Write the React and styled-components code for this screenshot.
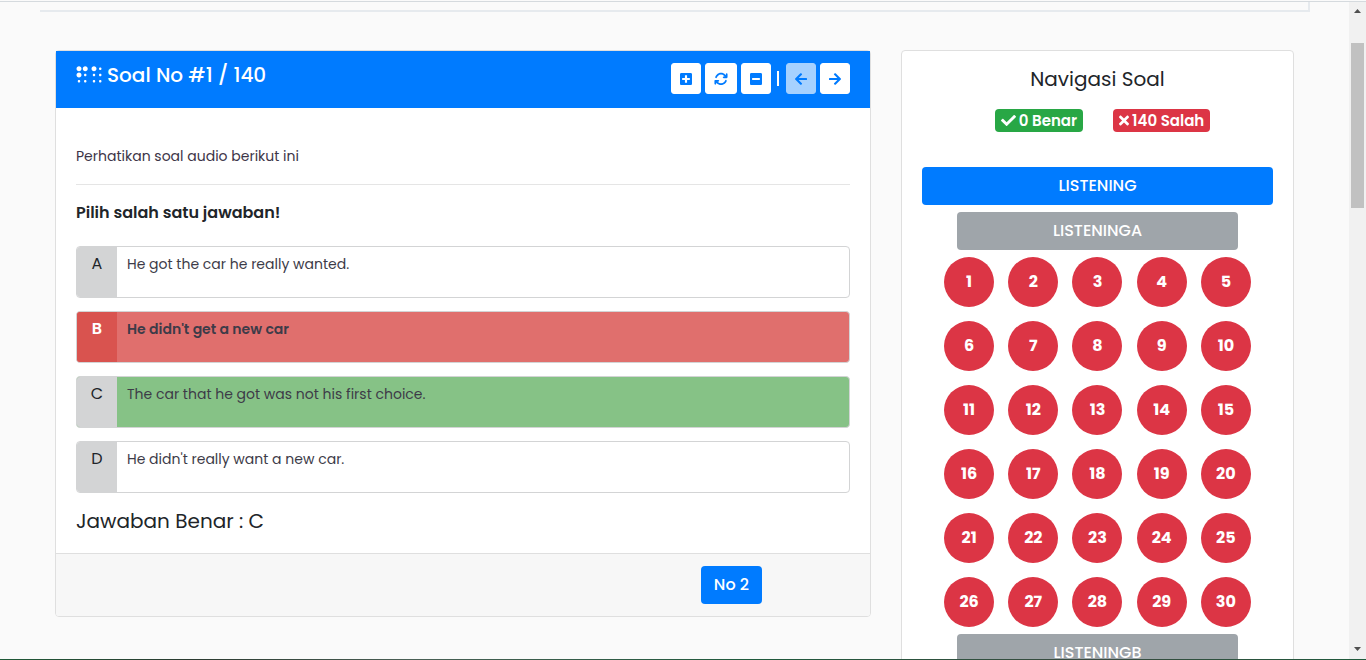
import React from "react";
import styled, { createGlobalStyle } from "styled-components";
import {
  FaBraille,
  FaPlusSquare,
  FaMinusSquare,
  FaArrowLeft,
  FaArrowRight,
  FaCheck,
  FaTimes,
} from "react-icons/fa";
import { FaArrowsRotate } from "react-icons/fa6";

const GlobalStyle = createGlobalStyle`
  *, *::before, *::after { box-sizing: border-box; }
  body {
    margin: 0;
    background: #fafafa;
    color: #212529;
    font-family: Poppins, Inter, "Open Sans", sans-serif;
    font-size: 16px;
    line-height: 24px;
  }
  button { font: inherit; cursor: pointer; }
  h1, h2, h3, p, ul { margin: 0; padding: 0; }
`;

const Frame = styled.div`
  display: flex;
  flex-direction: column;
  height: 100vh;
  overflow: hidden;
`;

const TopEdge = styled.div`
  flex: none;
  height: 2px;
  border-bottom: 1px solid #d5dade;
`;

const BottomEdge = styled.div`
  flex: none;
  height: 1px;
  background: linear-gradient(90deg, #1f5a38, #2b3a30 14%, #4a5f55 30%, #1f5a3c 55%, #3a4a40 80%, #1f5a3c);
`;

const Window = styled.div`
  display: flex;
  flex: 1;
  min-height: 0;
`;

const Page = styled.div`
  flex: 1;
  min-width: 0;
  overflow: hidden;
  padding: 0 39px 0 40px;
`;

const TopPanel = styled.div`
  height: 10px;
  border: 2px solid #e6eaee;
  border-top: 0;
  border-left: 0;
`;

const Columns = styled.main`
  display: grid;
  grid-template-columns: 2fr 1fr;
  align-items: start;
  padding: 38px 1px 0 0;
`;

const Card = styled.section`
  min-width: 0;
  margin: 0 15px;
  background: #fff;
  border: 1px solid #dfdfdf;
  border-radius: 4px;
`;

const CardHeader = styled.header`
  display: flex;
  justify-content: space-between;
  align-items: flex-start;
  padding: 12px 20px;
  height: 57px;
  background: #007bff;
  color: #fff;
`;

const Title = styled.h1`
  display: flex;
  align-items: center;
  gap: 5px;
  font-size: 20px;
  font-weight: 500;
  line-height: 24px;

  svg { width: 26px; height: 20px; }
`;

const Toolbar = styled.div`
  display: flex;
  align-items: center;
  gap: 4px;
`;

const ToolButton = styled.button`
  display: flex;
  align-items: center;
  height: 31px;
  padding: 0 8px;
  border: 1px solid #fff;
  border-radius: 3px;
  background: #fff;
  color: #007bff;
  opacity: ${(p) => (p.disabled ? 0.65 : 1)};

  svg { width: ${(p) => (p.$wide ? 14 : 12)}px; height: 14px; }
`;

const Divider = styled.span`
  width: 2px;
  height: 15px;
  margin: 0 3px 0 2px;
  background: #fff;
`;

const CardBody = styled.div`
  padding: 36px 20px 20px;
`;

const Prompt = styled.p`
  padding-bottom: 16px;
  border-bottom: 1px solid #e5e5e5;
  color: #3d3548;
  font-size: 14px;
`;

const Instruction = styled.p`
  padding: 16px 0 21px;
  font-weight: 600;
`;

const Options = styled.ul`
  display: grid;
  gap: 13px;
  list-style: none;
`;

const tones = {
  plain: { letter: "#d3d4d5", body: "#fff", text: "#212529" },
  wrong: { letter: "#d9534f", body: "#e06f6d", text: "#fff" },
  right: { letter: "#d3d4d5", body: "#86c286", text: "#212529" },
};

const Option = styled.li`
  display: flex;
  height: 52px;
  overflow: hidden;
  border: 1px solid #d3d4d5;
  border-radius: 4px;
  background: ${(p) => tones[p.$tone].body};
  font-weight: ${(p) => (p.$tone === "wrong" ? 600 : 400)};
`;

const Letter = styled.span`
  width: 40px;
  padding-top: 5px;
  background: ${(p) => tones[p.$tone].letter};
  color: ${(p) => tones[p.$tone].text};
  text-align: center;
`;

const OptionText = styled.span`
  padding: 5px 10px;
  color: #3d3b48;
  font-size: 14px;
`;

const Answer = styled.p`
  padding-top: 16px;
  font-size: 20px;
`;

const CardFooter = styled.footer`
  display: flex;
  justify-content: flex-end;
  padding: 12px 108px 12px 20px;
  border-top: 1px solid #dfdfdf;
  border-radius: 0 0 3px 3px;
  background: #f7f7f7;
`;

const Button = styled.button`
  height: 38px;
  padding: 0 13px;
  width: ${(p) => p.$width || "auto"};
  border: 0;
  border-radius: 4px;
  background: ${(p) => (p.$muted ? "#9fa5aa" : "#007bff")};
  color: #fff;
  font-size: 16px;
  font-weight: 500;
`;

const NavCard = styled(Card)`
  padding: 16px 20px;
`;

const NavTitle = styled.h2`
  font-size: 20px;
  font-weight: 400;
  text-align: center;
`;

const Score = styled.div`
  display: flex;
  justify-content: center;
  gap: 30px;
  padding: 18px 0 35px 10px;
`;

const Badge = styled.span`
  display: flex;
  align-items: center;
  gap: 3px;
  height: 23px;
  padding: 0 6px;
  border-radius: 4px;
  background: ${(p) => p.$color};
  color: #fff;
  font-size: 15px;
  font-weight: 600;

  svg { width: ${(p) => (p.$narrow ? 10 : 15)}px; height: 15px; }
`;

const Sections = styled.nav`
  display: flex;
  flex-direction: column;
  align-items: center;
  gap: 7px;
`;

const Numbers = styled.div`
  display: grid;
  grid-template-columns: repeat(5, 1fr);
  justify-items: center;
  row-gap: 14px;
  width: 100%;
  padding: 0 15px;
`;

const NumberButton = styled.button`
  width: 50px;
  height: 50px;
  padding: 0;
  border: 0;
  border-radius: 50%;
  background: #dc3545;
  color: #fff;
  font-size: 16px;
  font-weight: 700;
`;

const Scrollbar = styled.div`
  display: flex;
  flex: none;
  flex-direction: column;
  align-items: center;
  width: 17px;
  padding: 7px 0 8px;
  background: #f1f1f1;
`;

const Arrow = styled.svg`
  display: block;
  width: 7px;
  height: 4px;
  fill: #505050;
`;

const Thumb = styled.div`
  width: 13px;
  height: calc(25% + 4px);
  margin: 30px 0 auto;
  background: #c1c1c1;
`;

const options = [
  { letter: "A", text: "He got the car he really wanted.", tone: "plain" },
  { letter: "B", text: "He didn't get a new car", tone: "wrong" },
  { letter: "C", text: "The car that he got was not his first choice.", tone: "right" },
  { letter: "D", text: "He didn't really want a new car.", tone: "plain" },
];

const numbers = Array.from({ length: 30 }, (_, i) => i + 1);

export default function App() {
  return (
    <Frame>
      <GlobalStyle />
      <TopEdge />
      <Window>
        <Page>
          <TopPanel />
          <Columns>
            <Card>
              <CardHeader>
                <Title>
                  <FaBraille />
                  Soal No #1 / 140
                </Title>
                <Toolbar>
                  <ToolButton aria-label="Perbesar"><FaPlusSquare /></ToolButton>
                  <ToolButton aria-label="Reset" $wide><FaArrowsRotate /></ToolButton>
                  <ToolButton aria-label="Perkecil"><FaMinusSquare /></ToolButton>
                  <Divider />
                  <ToolButton aria-label="Sebelumnya" disabled><FaArrowLeft /></ToolButton>
                  <ToolButton aria-label="Berikutnya"><FaArrowRight /></ToolButton>
                </Toolbar>
              </CardHeader>
              <CardBody>
                <Prompt>Perhatikan soal audio berikut ini</Prompt>
                <Instruction>Pilih salah satu jawaban!</Instruction>
                <Options>
                  {options.map((o) => (
                    <Option key={o.letter} $tone={o.tone}>
                      <Letter $tone={o.tone}>{o.letter}</Letter>
                      <OptionText>{o.text}</OptionText>
                    </Option>
                  ))}
                </Options>
                <Answer>Jawaban Benar : C</Answer>
              </CardBody>
              <CardFooter>
                <Button>No 2</Button>
              </CardFooter>
            </Card>
            <NavCard>
              <NavTitle>Navigasi Soal</NavTitle>
              <Score>
                <Badge $color="#28a745"><FaCheck />0 Benar</Badge>
                <Badge $color="#dc3545" $narrow><FaTimes />140 Salah</Badge>
              </Score>
              <Sections>
                <Button $width="100%">LISTENING</Button>
                <Button $width="80%" $muted>LISTENINGA</Button>
                <Numbers>
                  {numbers.map((n) => (
                    <NumberButton key={n}>{n}</NumberButton>
                  ))}
                </Numbers>
                <Button $width="80%" $muted>LISTENINGB</Button>
              </Sections>
            </NavCard>
          </Columns>
        </Page>
        <Scrollbar aria-hidden="true">
          <Arrow viewBox="0 0 7 4"><path d="M0 4 3.5 0 7 4z" /></Arrow>
          <Thumb />
          <Arrow viewBox="0 0 7 4"><path d="M0 0h7L3.5 4z" /></Arrow>
        </Scrollbar>
      </Window>
      <BottomEdge />
    </Frame>
  );
}
